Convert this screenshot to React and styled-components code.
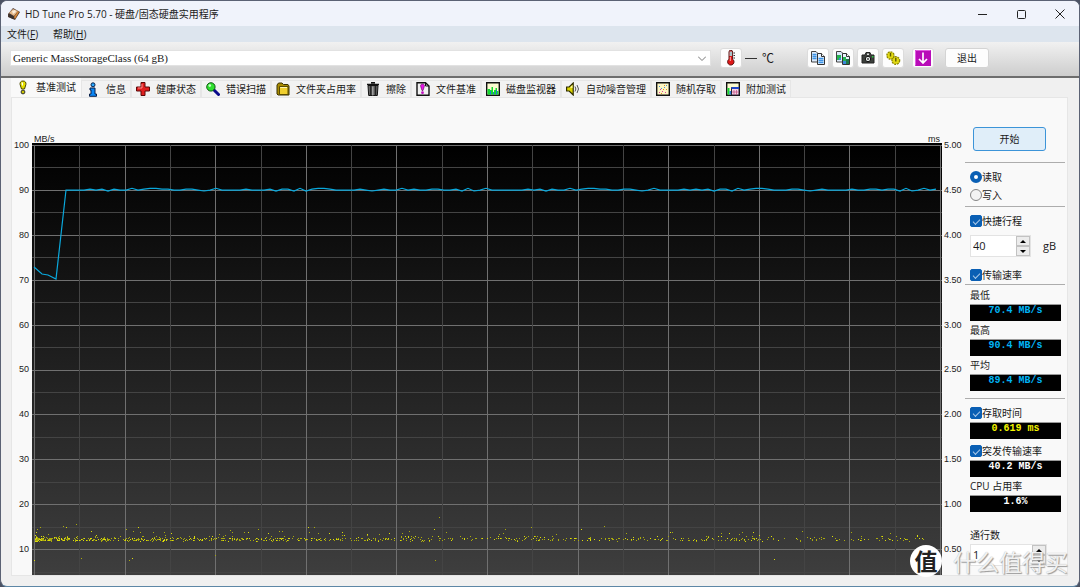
import React, { useState } from "react";
import styled, { createGlobalStyle } from "styled-components";

const GlobalStyle = createGlobalStyle`
  * {
    box-sizing: border-box;
  }
  body {
    margin: 0;
    background: #4b5263;
    color: #1a1a1a;
    font: 10px/16px "Open Sans", "Noto Sans CJK SC", sans-serif;
  }
  button, input, select {
    margin: 0;
    padding: 0;
    color: inherit;
    font: inherit;
  }
`;

/* ---------- icons ---------- */

const AppIcon = () => (
  <svg width="14" height="14" viewBox="0 0 14 14">
    <path d="M1 7l5-6 7 4-5 8-7-3z" fill="#4a3730" />
    <path d="M2 6l4-4 5 2-4 5z" fill="#e6b98a" />
    <path d="M5 4l3-1 1 2-3 2z" fill="#fbeedd" />
    <path d="M7 10l4-6 1 1-4 7z" fill="#d98836" />
    <path d="M2 7l5 3-1 2-4-2z" fill="#39322e" />
  </svg>
);

const BulbIcon = () => (
  <svg width="14" height="15" viewBox="0 0 14 15">
    <path d="M7 1C4.600 1 3.800 2.600 4.100 4.500L5.500 9h3l1.400-4.500C10.200 2.600 9.400 1 7 1z" fill="#e6e000" stroke="#4a4700" />
    <path d="M5.500 2.500h1.500v3h-1z" fill="#fff" />
    <circle cx="7" cy="12" r="1.900" fill="#c9c400" stroke="#333" />
  </svg>
);

const InfoIcon = () => (
  <svg width="14" height="15" viewBox="0 0 14 15">
    <circle cx="7" cy="2.800" r="2" fill="#29a8ff" stroke="#08204a" />
    <path d="M4 6h5v6h1.500v2.300h-7V12H5V8H4z" fill="#0a86f5" stroke="#08204a" />
  </svg>
);

const CrossIcon = () => (
  <svg width="14" height="14" viewBox="0 0 14 14">
    <path d="M5 .5h4V5h4.500v4H9v4.500H5V9H.5V5H5z" fill="#e02020" stroke="#5a0808" />
    <path d="M6 2v4H2" fill="none" stroke="#ff8b8b" />
  </svg>
);

const SearchIcon = () => (
  <svg width="14" height="14" viewBox="0 0 14 14">
    <path d="M7.500 7.500l5 5" stroke="#0a0a8a" strokeWidth="3" strokeLinecap="round" />
    <circle cx="4.900" cy="4.900" r="4.200" fill="#2fe02f" stroke="#0d5a12" />
    <circle cx="3.800" cy="3.600" r="1.300" fill="#c8ffc8" />
  </svg>
);

const FolderIcon = () => (
  <svg width="14" height="14" viewBox="0 0 14 14">
    <path d="M1 3l1.500-2H6l1.500 1.500H12L13 4v9H2L1 12z" fill="#a88a00" stroke="#3b3200" />
    <path d="M3.500 4.500H12v8H3.500z" fill="#f0cf2e" stroke="#5a4b00" />
    <path d="M4.500 6v-.5H11" fill="none" stroke="#fff6b0" />
  </svg>
);

const TrashIcon = () => (
  <svg width="14" height="14" viewBox="0 0 14 14">
    <path d="M5 .7h4M1 2.500h12" stroke="#111" strokeWidth="1.500" />
    <path d="M2 3.500h10l-.7 10H2.700z" fill="#666" stroke="#111" />
    <path d="M4.800 4v9.500M9.500 4v9.500" stroke="#222" strokeWidth="1.400" />
    <path d="M6.800 4.500v9" stroke="#bbb" />
  </svg>
);

const FileBenchIcon = () => (
  <svg width="14" height="14" viewBox="0 0 14 14">
    <path d="M1 .7h8.500L13 4v9.300H1z" fill="#f1f1f1" stroke="#111" strokeWidth="1.400" />
    <path d="M9.500 1v3H13" fill="none" stroke="#111" />
    <path d="M6.500 2C5 2 4.300 3 4.700 4.500L6 8.500h1l1.300-4C8.700 3 8 2 6.500 2z" fill="#e815e8" stroke="#550055" strokeWidth=".6" />
    <circle cx="6.500" cy="10.700" r="1.400" fill="#c010c0" />
  </svg>
);

const MonitorIcon = () => (
  <svg width="14" height="14" viewBox="0 0 14 14">
    <path d="M.7.7h12.600v12.600H.7z" fill="#fbfbd0" stroke="#111" strokeWidth="1.400" />
    <path d="M1.500 7H4v1h1.500V5H7v5h1V8h1.500V6H11v3h1.500v3.500h-11z" fill="#12d92e" />
    <path d="M4 9h1v3.500H4zM7 10h1v2.500H7zM10 8h1v4.500h-1z" fill="#2278d8" />
  </svg>
);

const SpeakerIcon = () => (
  <svg width="14" height="14" viewBox="0 0 14 14">
    <path d="M.6 5h2.600l4-4v12l-4-4H.6z" fill="#dcd400" stroke="#2e2c00" strokeWidth="1.200" />
    <path d="M4 5.500L6.500 3v3z" fill="#fffbb0" />
    <path d="M9 4.500q1.800 2.500 0 5M11 3q3 4 0 8" fill="none" stroke="#555" />
  </svg>
);

const RandomIcon = () => (
  <svg width="14" height="14" viewBox="0 0 14 14">
    <path d="M.7.7h12.600v12.600H.7z" fill="#fdf6c4" stroke="#111" strokeWidth="1.400" />
    <path d="M3 10h1v1H3zM6 9h1v1H6zM9 10h1v1H9zM4 7h1v1H4z" fill="#e03ca0" />
    <path d="M5 6h1v1H5zM8 5h1v1H8zM10 3h1v1h-1zM3 4h1v1H3z" fill="#4a90d8" />
    <path d="M7 7h1v1H7zM10 7h1v1h-1zM5 11h1v1H5zM8 3h1v1H8z" fill="#e08a20" />
  </svg>
);

const ExtraIcon = () => (
  <svg width="14" height="14" viewBox="0 0 14 14">
    <path d="M.7.7h12.600v12.600H.7z" fill="#fbfbd0" stroke="#111" strokeWidth="1.400" />
    <path d="M1.500 6h2v6.500h-2z" fill="#12d92e" />
    <path d="M3.500 9h1.500v3.500H3.500z" fill="#2278d8" />
    <path d="M5.500 5.500h7.500v7.500H5.500z" fill="#f3d4e6" stroke="#223" />
    <path d="M5.500 6h7.500" stroke="#1f46c8" strokeWidth="2" />
    <path d="M8 8v5M10.500 8v5M6 10h7" stroke="#c04a80" strokeWidth=".7" />
  </svg>
);

const ThermoIcon = () => (
  <svg width="16" height="16" viewBox="0 0 16 16">
    <path d="M6 2a1.800 1.800 0 013.600 0v7.200a3.200 3.200 0 11-3.600 0z" fill="#e01818" stroke="#5a1010" />
    <path d="M6.500 1.500h2.600V6H6.500z" fill="#a9c3c8" />
    <path d="M7.300 7v4" stroke="#ffb0b0" />
    <path d="M10.500 3H12M10.500 5.500H12M10.500 8H12" stroke="#333" />
  </svg>
);

const CopyIcon = ({ image }) => (
  <svg width="16" height="16" viewBox="0 0 16 16">
    <path d="M1.500 1.500H6L8.500 4v8h-7z" fill="#dceafa" stroke="#444" />
    <path d="M7.500 3.500h4l3 3v8h-7z" fill="#e9f3fe" stroke="#333" />
    <path d="M11.500 3.500v3h3" fill="#fff" stroke="#333" />
    {image ? (
      <>
        <path d="M2 5h4v5H2zM8 7h3v4H8z" fill="#25b452" />
        <path d="M11 9h3v5h-3z" fill="#1d7a4a" />
        <path d="M8 11h3v3H8zM4 8h2v2H4z" fill="#3a88d8" />
      </>
    ) : (
      <path d="M2.500 4.500h4M2.500 6.500h4M2.500 8.500h4M8.500 8.500h5M8.500 10.500h5M8.500 12.500h5" stroke="#3c93e6" strokeWidth="1.300" />
    )}
  </svg>
);

const CameraIcon = () => (
  <svg width="16" height="16" viewBox="0 0 16 16">
    <path d="M2 5h3l1-2.500h4L11 5h3v8H2z" fill="#3c403c" stroke="#222" />
    <path d="M7 3.500h2V5H7z" fill="#ddd" />
    <circle cx="8" cy="9" r="2.700" fill="#dfe5e2" stroke="#111" />
    <circle cx="8" cy="9" r="1.100" fill="#555" />
    <path d="M12 6h1.500v1.500H12z" fill="#28c840" />
  </svg>
);

const GearsIcon = () => (
  <svg width="16" height="16" viewBox="0 0 16 16">
    <circle cx="5.500" cy="5.500" r="3.400" fill="#d8d010" stroke="#8c8600" strokeWidth="1.800" strokeDasharray="1.800 .8" />
    <circle cx="10.800" cy="10.500" r="3.600" fill="#d8d010" stroke="#8c8600" strokeWidth="1.800" strokeDasharray="1.800 .8" />
    <circle cx="5.500" cy="5.500" r="2.900" fill="#e2da12" />
    <circle cx="10.800" cy="10.500" r="3.100" fill="#e2da12" />
    <path d="M5.500 3v3.500M10.800 8v3.500" stroke="#5c5800" strokeWidth="1.400" />
  </svg>
);

const DownIcon = () => (
  <svg width="16" height="16" viewBox="0 0 16 16">
    <path d="M0 0h16v16H0z" fill="#b80cb8" />
    <path d="M.5 15.500V.5h15" fill="none" stroke="#e05ce0" />
    <path d="M8 2.500v10M4 9l4 4 4-4" fill="none" stroke="#fff" strokeWidth="1.700" />
  </svg>
);

/* ---------- benchmark data ---------- */

const TABS = [
  ["基准测试", BulbIcon],
  ["信息", InfoIcon],
  ["健康状态", CrossIcon],
  ["错误扫描", SearchIcon],
  ["文件夹占用率", FolderIcon],
  ["擦除", TrashIcon],
  ["文件基准", FileBenchIcon],
  ["磁盘监视器", MonitorIcon],
  ["自动噪音管理", SpeakerIcon],
  ["随机存取", RandomIcon],
  ["附加测试", ExtraIcon],
];

const SPEEDS = ["100", "90", "80", "70", "60", "50", "40", "30", "20", "10"];
const TIMES = ["5.00", "4.50", "4.00", "3.50", "3.00", "2.50", "2.00", "1.50", "1.00", "0.50"];

// plot units: 910 wide, 432 high, first grid line at (2, 2)
const COLS = Array.from({ length: 21 }, (_, i) => Math.round(2 + i * 45.3));
const ROWS = Array.from({ length: 20 }, (_, i) => Math.round(2 + i * 22.45));

const WOBBLE = "1101122112233112211312201122113311220011";

function transferLine() {
  let d = "M2 124L10 131L16 132L24 136L34 47";
  for (let i = 0; 40 + i * 6 < 910; i++) {
    const step = Number(WOBBLE[(i * 7 + (i >> 3)) % WOBBLE.length]);
    d += `L${40 + i * 6} ${48 - step * 0.9}`;
  }
  return d;
}

function accessDots() {
  let seed = 77;
  const rand = () => {
    seed = (seed * 16807) % 2147483647;
    return seed / 2147483647;
  };
  const dots = [
    [2, 417], [49, 415], [97, 417], [100, 415], [183, 412], [403, 417], [742, 416],
    [44, 381], [31, 383], [34, 384], [8, 384], [5, 386], [106, 384], [198, 387],
    [226, 386], [276, 384], [282, 384], [407, 374], [402, 386], [499, 384],
    [572, 383], [549, 386], [640, 389], [473, 386], [697, 390], [94, 386],
  ];
  for (let i = 0; i < 880; i++) {
    const x = 3 + Math.floor(Math.pow(rand(), 1.8) * 890);
    const spread = rand();
    let y = 395 + rand() * 3;
    if (spread > 0.92) {
      y = 388 + rand() * 7;
    } else if (spread > 0.7) {
      y = 393 + rand() * 6;
    }
    dots.push([x, Math.floor(y)]);
  }
  return dots;
}

const LINE = transferLine();
const DOTS = accessDots();

const Plot = () => (
  <PlotSvg viewBox="0 0 910 432" preserveAspectRatio="none">
    <defs>
      <linearGradient id="plotBg" x1="0" y1="0" x2="0" y2="1">
        <stop offset="0" stopColor="#000" />
        <stop offset="1" stopColor="#3e3e3e" />
      </linearGradient>
    </defs>
    <rect width="910" height="432" fill="url(#plotBg)" />
    {ROWS.map((y, i) => (
      <rect key={y} x="0" y={y} width="910" height="1" fill={i % 2 ? "#444" : "#707070"} />
    ))}
    {COLS.map((x, i) => (
      <rect key={x} x={x} y="2" width="1" height="430" fill={i % 2 ? "#444" : "#707070"} />
    ))}
    <path d={LINE} fill="none" stroke="#0aa8dc" strokeWidth="1.200" />
    {DOTS.map(([x, y], i) => (
      <rect key={i} x={x} y={y} width="1" height="1" fill={i % 3 ? "#aaaa0c" : "#dcdc0a"} />
    ))}
  </PlotSvg>
);

const Spinner = ({ id, value, wide }) => {
  const [count, setCount] = useState(value);
  return (
    <SpinBox $wide={wide}>
      <SpinInput id={id} value={count} onChange={(e) => setCount(e.target.value)} />
      <SpinButtons>
        <SpinButton aria-label="增加" onClick={() => setCount(Number(count) + 1)}>
          <svg width="6" height="3" viewBox="0 0 6 3"><path d="M3 0l3 3H0z" /></svg>
        </SpinButton>
        <SpinButton aria-label="减少" onClick={() => setCount(Number(count) - 1)}>
          <svg width="6" height="3" viewBox="0 0 6 3"><path d="M0 0h6L3 3z" /></svg>
        </SpinButton>
      </SpinButtons>
    </SpinBox>
  );
};

const App = () => {
  const [tab, setTab] = useState("基准测试");
  const [mode, setMode] = useState("read");

  return (
    <Window>
      <GlobalStyle />
      <TitleBar>
        <AppIcon />
        <Title>HD Tune Pro 5.70 - 硬盘/固态硬盘实用程序</Title>
        <WindowButton aria-label="最小化">
          <svg width="10" height="10"><path d="M1 5.500h9" stroke="#222" /></svg>
        </WindowButton>
        <WindowButton aria-label="最大化">
          <svg width="10" height="10"><rect x="1.500" y="1.500" width="8" height="8" rx="1" fill="none" stroke="#222" /></svg>
        </WindowButton>
        <WindowButton aria-label="关闭">
          <svg width="10" height="10"><path d="M.5 .5l9 9M9.500 .5l-9 9" stroke="#222" /></svg>
        </WindowButton>
      </TitleBar>

      <MenuBar>
        <MenuItem>文件(<u>F</u>)</MenuItem>
        <MenuItem>帮助(<u>H</u>)</MenuItem>
      </MenuBar>

      <Toolbar>
        <DriveBox>
          <DriveSelect aria-label="驱动器">
            <option>Generic MassStorageClass (64 gB)</option>
          </DriveSelect>
          <svg width="8" height="5"><path d="M0 .5l4 4 4-4" fill="none" stroke="#777" /></svg>
        </DriveBox>
        <ToolButton aria-label="温度"><ThermoIcon /></ToolButton>
        <Temperature><Dash />℃</Temperature>
        <ToolGroup>
          <ToolButton aria-label="复制文本"><CopyIcon /></ToolButton>
          <ToolButton aria-label="复制图像"><CopyIcon image /></ToolButton>
          <ToolButton aria-label="屏幕截图"><CameraIcon /></ToolButton>
          <ToolButton aria-label="选项"><GearsIcon /></ToolButton>
        </ToolGroup>
        <ToolButton aria-label="保存"><DownIcon /></ToolButton>
        <ExitButton>退出</ExitButton>
      </Toolbar>

      <Tabs role="tablist">
        {TABS.map(([label, Icon]) => (
          <Tab
            key={label}
            role="tab"
            aria-selected={tab === label}
            $active={tab === label}
            onClick={() => setTab(label)}
          >
            <Icon />
            {label}
          </Tab>
        ))}
      </Tabs>

      <Panel>
        <Axis $align="right">
          {SPEEDS.map((s) => <span key={s}>{s}</span>)}
        </Axis>
        <Chart>
          <Units>
            <span>MB/s</span>
            <span>ms</span>
          </Units>
          <Plot />
        </Chart>
        <Axis $align="left">
          {TIMES.map((t) => <span key={t}>{t}</span>)}
        </Axis>

        <Sidebar>
          <StartButton>开始</StartButton>
          <Section $top={11}>
            <Choice>
              <Radio name="mode" checked={mode === "read"} onChange={() => setMode("read")} />
              读取
            </Choice>
            <Choice>
              <Radio name="mode" checked={mode === "write"} onChange={() => setMode("write")} />
              写入
            </Choice>
          </Section>
          <Section $top={2}>
            <Choice>
              <Check defaultChecked />
              快捷行程
            </Choice>
            <StrokeRow>
              <Spinner id="stroke" value="40" />
              <label htmlFor="stroke">gB</label>
            </StrokeRow>
            <Choice>
              <Check defaultChecked />
              传输速率
            </Choice>
          </Section>
          <Section $top={0} $tight>
            <Caption>最低</Caption>
            <Readout $color="#00b4f5">70.4 MB/s</Readout>
            <Caption>最高</Caption>
            <Readout $color="#00b4f5">90.4 MB/s</Readout>
            <Caption>平均</Caption>
            <Readout $color="#00b4f5">89.4 MB/s</Readout>
          </Section>
          <Section $top={7}>
            <Choice>
              <Check defaultChecked />
              存取时间
            </Choice>
            <Readout $color="#f4f400">0.619 ms</Readout>
            <Gap />
            <Choice>
              <Check defaultChecked />
              突发传输速率
            </Choice>
            <Readout $color="#fff">40.2 MB/s</Readout>
            <Caption>CPU 占用率</Caption>
            <Readout $color="#fff">1.6%</Readout>
            <PassLabel htmlFor="passes">通行数</PassLabel>
            <Spinner id="passes" value="1" wide />
          </Section>
        </Sidebar>
      </Panel>

      <Watermark>
        <Badge>值</Badge>
        什么值得买
      </Watermark>
    </Window>
  );
};

/* ---------- frame ---------- */

const Window = styled.div`
  position: relative;
  display: flex;
  flex-direction: column;
  min-height: 100vh;
  padding-bottom: 10px;
  background: #f0f0f0;
  border: 1px solid #5b6274;
  border-bottom-color: #5d87a6;
  border-radius: 7px;
  overflow: hidden;
`;

const TitleBar = styled.header`
  display: flex;
  align-items: center;
  height: 25px;
  padding-left: 6px;
  background: #f0f3fb;
`;

const Title = styled.h1`
  flex: 1;
  margin: 0 0 0 4px;
  font-size: 10px;
  font-weight: 400;
`;

const WindowButton = styled.button`
  display: grid;
  place-items: center;
  width: 39px;
  height: 24px;
  background: none;
  border: 0;
`;

const MenuBar = styled.nav`
  display: flex;
  gap: 15px;
  height: 16px;
  padding-left: 6px;
  background: #dde5ee;
`;

const MenuItem = styled.button`
  background: none;
  border: 0;
`;

const Toolbar = styled.div`
  display: flex;
  align-items: center;
  height: 36px;
  padding: 0 90px 2px 9px;
  background: linear-gradient(#f1f1f1, #cdcdcd);
  border-bottom: 2px solid #6d6d6d;
`;

const DriveBox = styled.div`
  display: flex;
  flex: 1;
  align-items: center;
  height: 16px;
  margin-right: 9px;
  padding-right: 4px;
  background: #fff;
  border: 1px solid #e2e2e2;
`;

const DriveSelect = styled.select`
  flex: 1;
  height: 14px;
  padding-left: 2px;
  appearance: none;
  background: none;
  border: 0;
  font: 11px/14px "Liberation Serif", serif;
`;

const ToolButton = styled.button`
  display: grid;
  place-items: center;
  width: 22px;
  height: 20px;
  background: #fdfdfd;
  border: 1px solid #dcdcdc;
  border-radius: 3px;
`;

const Temperature = styled.span`
  display: flex;
  align-items: center;
  gap: 5px;
  width: 65px;
  padding-left: 3px;
  font: 12px/16px "Noto Sans CJK SC", sans-serif;
`;

const Dash = styled.span`
  width: 12px;
  height: 1px;
  background: #333;
`;

const ToolGroup = styled.div`
  display: flex;
  gap: 3px;
  margin-right: 8px;
`;

const ExitButton = styled.button`
  width: 44px;
  height: 20px;
  margin-left: 11px;
  background: #fdfdfd;
  border: 1px solid #d4d4d4;
  border-radius: 3px;
`;

const Tabs = styled.div`
  display: flex;
  align-items: flex-end;
  height: 19px;
  padding-left: 10px;
`;

const Tab = styled.button`
  display: flex;
  align-items: center;
  gap: 6px;
  height: ${(props) => (props.$active ? 19 : 17)}px;
  padding: 0 4px ${(props) => (props.$active ? 2 : 0)}px;
  white-space: nowrap;
  background: ${(props) => (props.$active ? "#f9f9f9" : "#f2f2f2")};
  border: 1px solid ${(props) => (props.$active ? "#f9f9f9" : "#e6e6e6")};
  border-bottom: 0;
`;

const Panel = styled.main`
  display: flex;
  flex: 1;
  margin: 0 11px 0 10px;
  background: #f9f9f9;
  border: 1px solid #e6e6e6;
`;

/* ---------- chart ---------- */

const Axis = styled.div`
  display: flex;
  flex-direction: column;
  justify-content: space-between;
  width: ${(props) => (props.$align === "right" ? 20 : 23)}px;
  height: 414px;
  margin-top: 42px;
  padding: ${(props) => (props.$align === "right" ? "0 3px 0 0" : "0 0 0 2px")};
  color: #222;
  font: 9px/10px "Liberation Sans", sans-serif;
  text-align: ${(props) => props.$align};
`;

const Chart = styled.div`
  flex: 1;
  min-width: 0;
  padding-top: 35px;
`;

const Units = styled.div`
  display: flex;
  justify-content: space-between;
  height: 10px;
  padding: 0 2px;
  font: 9px/12px "Liberation Sans", sans-serif;
`;

const PlotSvg = styled.svg`
  display: block;
  width: 100%;
  height: 432px;
`;

/* ---------- sidebar ---------- */

const Sidebar = styled.aside`
  width: 102px;
  padding: 29px 2px 0 0;
`;

const StartButton = styled.button`
  display: block;
  width: 73px;
  height: 24px;
  margin-left: 8px;
  background: #e0eef9;
  border: 1px solid #3c94d8;
  border-radius: 3px;
`;

const Section = styled.section`
  margin-top: ${(props) => props.$top}px;
  padding: ${(props) => (props.$tight ? 1 : 5)}px 4px 0 5px;
  border-top: 1px solid #adadad;
`;

const Choice = styled.label`
  display: flex;
  align-items: center;
  height: 18px;
  white-space: nowrap;
`;

const Radio = styled.input.attrs({ type: "radio" })`
  width: 12px;
  height: 12px;
  appearance: none;
  background: #f3f3f3;
  border: 1px solid #858585;
  border-radius: 50%;
  &:checked {
    background: #fff;
    border: 4px solid #0a5fb4;
  }
`;

const Check = styled.input.attrs({ type: "checkbox" })`
  display: grid;
  place-items: center;
  width: 12px;
  height: 12px;
  appearance: none;
  background: #fff;
  border: 1px solid #858585;
  border-radius: 2px;
  &:checked {
    background: #0a5fb4;
    border-color: #0a5fb4;
  }
  &:checked::before {
    content: "";
    width: 6px;
    height: 3px;
    border: solid #a9c8e8;
    border-width: 0 0 1px 1px;
    transform: rotate(-45deg);
  }
`;

const StrokeRow = styled.div`
  display: flex;
  align-items: center;
  gap: 12px;
  margin: 5px 0 9px;
  font-size: 11px;
`;

const SpinBox = styled.div`
  display: flex;
  width: ${(props) => (props.$wide ? 77 : 61)}px;
  height: 22px;
  background: #fff;
  border: 1px solid #e3e3e3;
`;

const SpinInput = styled.input`
  flex: 1;
  min-width: 0;
  padding-left: 2px;
  background: none;
  border: 0;
  font-size: 11px;
`;

const SpinButtons = styled.div`
  display: grid;
  width: 14px;
  grid-template-rows: 1fr 1fr;
`;

const SpinButton = styled.button`
  display: grid;
  place-items: center;
  background: #ececec;
  border: 1px solid #c2c2c2;
`;

const Caption = styled.div`
  height: 18px;
  line-height: 18px;
`;

const Readout = styled.output`
  display: block;
  height: 17px;
  background: #000;
  border-top: 1px solid #999;
  color: ${(props) => props.$color};
  font: bold 10px/12px "Liberation Mono", monospace;
  text-align: center;
`;

const Gap = styled.div`
  height: 3px;
`;

const PassLabel = styled.label`
  display: block;
  margin-top: 14px;
  line-height: 18px;
`;

/* ---------- overlay ---------- */

const Watermark = styled.div`
  position: absolute;
  right: 11px;
  bottom: 9px;
  display: flex;
  align-items: center;
  gap: 11px;
  color: rgba(255, 255, 255, 0.85);
  font: 23px/24px "Noto Sans CJK SC", sans-serif;
  text-shadow: 1px 1px 1px #999, 0 0 1px #aaa;
  pointer-events: none;
`;

const Badge = styled.span`
  width: 32px;
  height: 32px;
  background: #fff;
  border-radius: 50%;
  color: #222;
  font-weight: 700;
  line-height: 30px;
  text-align: center;
  text-shadow: none;
`;

export default App;
